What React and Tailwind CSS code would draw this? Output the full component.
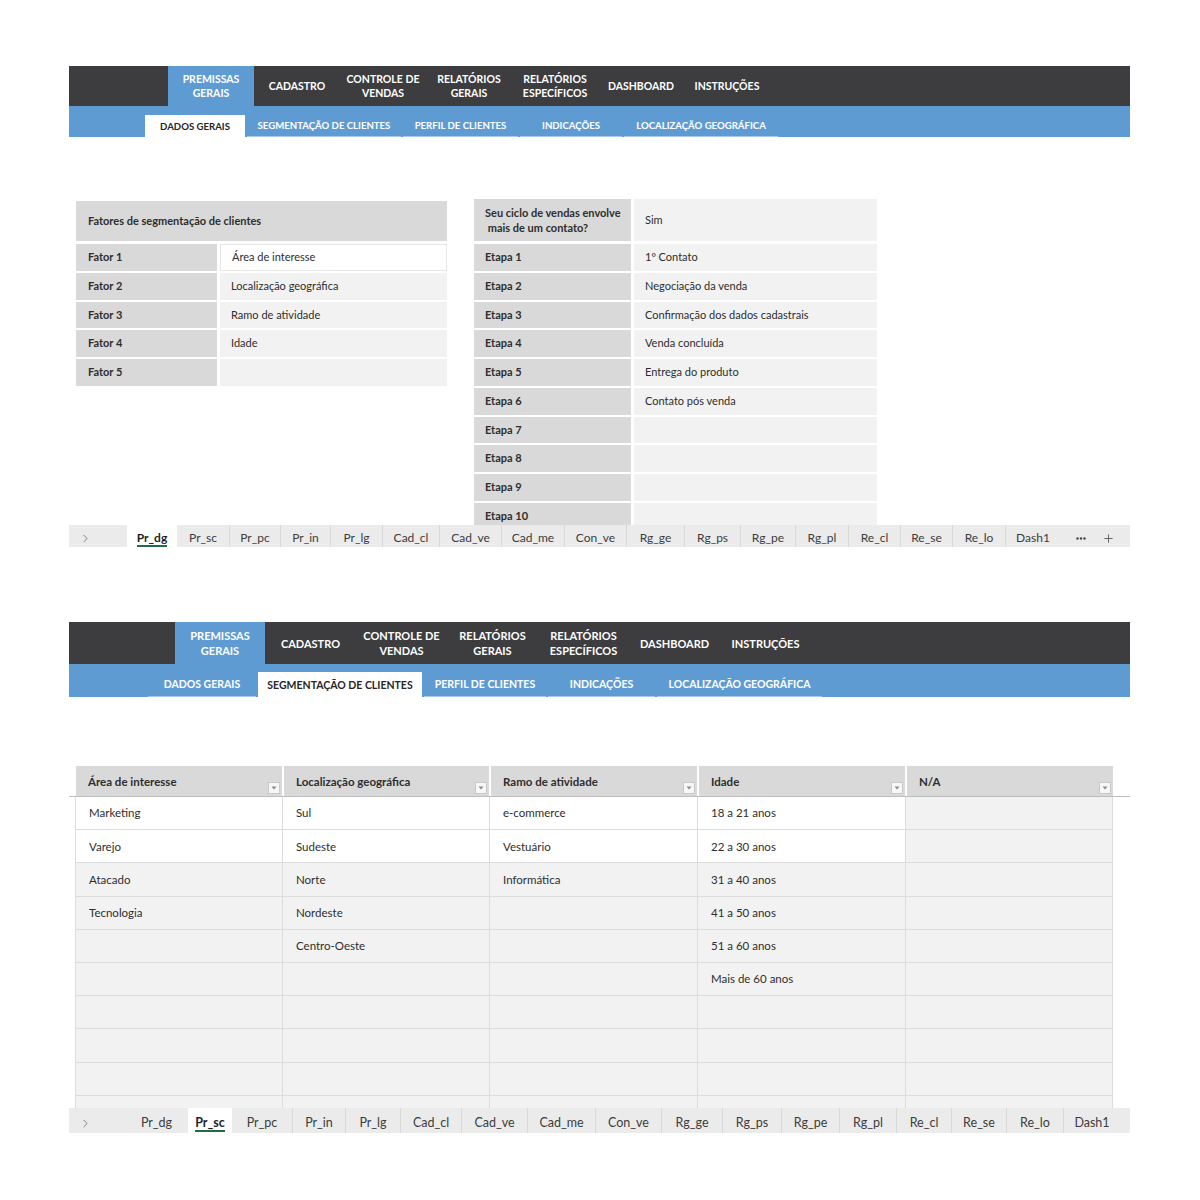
import { ChevronRight, Plus } from 'lucide-react'

const navItems = [
  ['PREMISSAS', 'GERAIS'],
  ['CADASTRO'],
  ['CONTROLE DE', 'VENDAS'],
  ['RELATÓRIOS', 'GERAIS'],
  ['RELATÓRIOS', 'ESPECÍFICOS'],
  ['DASHBOARD'],
  ['INSTRUÇÕES'],
]

const subTabs1 = [
  { label: 'DADOS GERAIS', w: 'w-[100px]' },
  { label: 'SEGMENTAÇÃO DE CLIENTES', w: 'w-[154px]' },
  { label: 'PERFIL DE CLIENTES', w: 'w-[115px]' },
  { label: 'INDICAÇÕES', w: 'w-[102px]' },
  { label: 'LOCALIZAÇÃO GEOGRÁFICA', w: 'w-[154px]' },
]

const subTabs2 = [
  { label: 'DADOS GERAIS', w: 'w-[108px]' },
  { label: 'SEGMENTAÇÃO DE CLIENTES', w: 'w-[164px]' },
  { label: 'PERFIL DE CLIENTES', w: 'w-[122px]' },
  { label: 'INDICAÇÕES', w: 'w-[107px]' },
  { label: 'LOCALIZAÇÃO GEOGRÁFICA', w: 'w-[165px]' },
]

const sheets1 = [
  ['Pr_dg', 'w-[50px]'], ['Pr_sc', 'w-[52px]'], ['Pr_pc', 'w-[51px]'], ['Pr_in', 'w-[50px]'],
  ['Pr_lg', 'w-[52px]'], ['Cad_cl', 'w-[57px]'], ['Cad_ve', 'w-[62px]'], ['Cad_me', 'w-[63px]'],
  ['Con_ve', 'w-[62px]'], ['Rg_ge', 'w-[58px]'], ['Rg_ps', 'w-[56px]'], ['Rg_pe', 'w-[55px]'],
  ['Rg_pl', 'w-[53px]'], ['Re_cl', 'w-[52px]'], ['Re_se', 'w-[52px]'], ['Re_lo', 'w-[53px]'],
  ['Dash1', 'w-[55px]'],
]

const sheets2 = [
  ['Pr_dg', 'w-[63px]'], ['Pr_sc', 'w-[44px]'], ['Pr_pc', 'w-[60px]'], ['Pr_in', 'w-[53px]'],
  ['Pr_lg', 'w-[55px]'], ['Cad_cl', 'w-[61px]'], ['Cad_ve', 'w-[66px]'], ['Cad_me', 'w-[68px]'],
  ['Con_ve', 'w-[66px]'], ['Rg_ge', 'w-[61px]'], ['Rg_ps', 'w-[59px]'], ['Rg_pe', 'w-[58px]'],
  ['Rg_pl', 'w-[57px]'], ['Re_cl', 'w-[55px]'], ['Re_se', 'w-[55px]'], ['Re_lo', 'w-[57px]'],
  ['Dash1', 'w-[57px]'],
]

const fatores = ['Área de interesse', 'Localização geográfica', 'Ramo de atividade', 'Idade', '']
const etapas = ['1º Contato', 'Negociação da venda', 'Confirmação dos dados cadastrais', 'Venda concluída', 'Entrega do produto', 'Contato pós venda', '', '', '', '']

const columns = ['Área de interesse', 'Localização geográfica', 'Ramo de atividade', 'Idade', 'N/A']
const colData = [
  ['Marketing', 'Varejo', 'Atacado', 'Tecnologia'],
  ['Sul', 'Sudeste', 'Norte', 'Nordeste', 'Centro-Oeste'],
  ['e-commerce', 'Vestuário', 'Informática'],
  ['18 a 21 anos', '22 a 30 anos', '31 a 40 anos', '41 a 50 anos', '51 a 60 anos', 'Mais de 60 anos'],
  [],
]

function TopNav({ lead, itemW, activeW, text, height }) {
  return (
    <div className={`flex ${height} bg-[#3d3d3f]`}>
      <div className={lead} />
      {navItems.map((lines, i) => (
        <div
          key={i}
          className={`${i === 0 ? `${activeW} bg-[#5f9bd3]` : itemW} flex flex-col items-center justify-center font-bold text-white ${text}`}
        >
          {lines.map((l) => (
            <span key={l}>{l}</span>
          ))}
        </div>
      ))}
    </div>
  )
}

function SubNav({ tabs, active, lead, height, tabH, text }) {
  return (
    <div className={`flex items-end ${height} bg-[#5f9bd3]`}>
      <div className={lead} />
      {tabs.map((t, i) => (
        <div
          key={t.label}
          className={`${t.w} ${tabH} mr-[2px] pt-[2px] flex items-center justify-center font-bold ${text} ${
            i === active ? 'bg-white text-[#262626]' : 'text-white border-b border-[#a8c9e9]'
          }`}
        >
          {t.label}
        </div>
      ))}
    </div>
  )
}

function SheetTabs({ sheets, active, lead, height, text, extra, pad }) {
  return (
    <div className={`flex ${height} bg-[#ebebeb] font-['Lato',sans-serif] ${text} text-[#3c3c3c]`}>
      <div className={`${lead} flex items-center pl-[10px] ${pad} text-[#555]`}>
        <ChevronRight size={13} strokeWidth={1.3} />
      </div>
      {sheets.map(([name, w], i) => (
        <div
          key={name}
          className={`${w} flex items-center justify-center ${pad} ${
            i === active ? 'bg-white font-bold text-[#1f1f1f]' : i === active + 1 || i === 0 ? '' : 'border-l border-[#d8d8d8]'
          }`}
        >
          <span className={i === active ? 'border-b-2 border-[#1f6e43] leading-[15px]' : ''}>{name}</span>
        </div>
      ))}
      {extra && (
        <div className={`flex items-center pl-[16px] gap-[16px] text-[#444] ${pad}`}>
          <svg width="10" height="3" viewBox="0 0 10 3">
            <circle cx="1.5" cy="1.5" r="1.2" fill="#444" />
            <circle cx="5" cy="1.5" r="1.2" fill="#444" />
            <circle cx="8.5" cy="1.5" r="1.2" fill="#444" />
          </svg>
          <Plus size={13} strokeWidth={1.4} />
        </div>
      )}
    </div>
  )
}

function DropButton() {
  return (
    <div className="w-[12px] h-[12px] mb-[2px] mr-[2px] self-end bg-[#f7f7f7] border border-[#c9c9c9] flex items-center justify-center">
      <svg width="6" height="4" viewBox="0 0 6 4">
        <path d="M0.5 0.5 L5.5 0.5 L3 3.5 Z" fill="#8a8a8a" />
      </svg>
    </div>
  )
}

export default function App() {
  return (
    <div className="min-h-[1200px] bg-white pt-[66px] font-['Lato',sans-serif] text-[#2e2e2e]">
      {/* Screen 1 */}
      <div className="w-[1061px] ml-[69px]">
        <TopNav lead="w-[99px]" itemW="w-[86px]" activeW="w-[86px]" text="text-[10.5px] leading-[14px]" height="h-[40px]" />
        <SubNav tabs={subTabs1} active={0} lead="w-[76px]" height="h-[31px]" tabH="h-[22px]" text="text-[9.6px]" />

        <div className="h-[388px] overflow-hidden flex items-start pt-[62px]">
          <div className="ml-[7px] mt-[2px] w-[371px] text-[11px]">
            <div className="h-[40px] bg-[#d9d9d9] flex items-center pl-[12px] font-bold">
              Fatores de segmentação de clientes
            </div>
            <div className="mt-[3px] flex flex-col gap-[2px]">
              {fatores.map((v, i) => (
                <div key={i} className="h-[26.75px] flex">
                  <div className="w-[141px] bg-[#d9d9d9] flex items-center pl-[12px] font-bold">Fator {i + 1}</div>
                  <div
                    className={`ml-[3px] flex-1 flex items-center pl-[11px] ${
                      i === 0 ? 'bg-white border border-[#e6e6e6]' : 'bg-[#f2f2f2]'
                    }`}
                  >
                    {v}
                  </div>
                </div>
              ))}
            </div>
          </div>

          <div className="ml-[27px] w-[403px] text-[11px]">
            <div className="h-[42px] flex">
              <div className="w-[157px] bg-[#d9d9d9] flex flex-col justify-center pl-[11px] font-bold leading-[15px]">
                <span>Seu ciclo de vendas envolve</span>
                <span>&nbsp;mais de um contato?</span>
              </div>
              <div className="ml-[3px] flex-1 bg-[#f2f2f2] flex items-center pl-[11px]">Sim</div>
            </div>
            <div className="mt-[3px] flex flex-col gap-[2px]">
              {etapas.map((v, i) => (
                <div key={i} className="h-[26.75px] flex">
                  <div className="w-[157px] bg-[#d9d9d9] flex items-center pl-[11px] font-bold">Etapa {i + 1}</div>
                  <div className="ml-[3px] flex-1 bg-[#f2f2f2] flex items-center pl-[11px]">{v}</div>
                </div>
              ))}
            </div>
          </div>
        </div>

        <SheetTabs sheets={sheets1} active={0} lead="w-[58px]" height="h-[22px]" text="text-[12px]" pad="pt-[4px]" extra />
      </div>

      {/* Screen 2 */}
      <div className="w-[1061px] ml-[69px] mt-[75px]">
        <TopNav lead="w-[106px]" itemW="w-[91px]" activeW="w-[90px]" text="text-[11px] leading-[15px]" height="h-[42px]" />
        <SubNav tabs={subTabs2} active={1} lead="w-[79px]" height="h-[33px]" tabH="h-[25px]" text="text-[10.5px]" />

        <div className="h-[411px] overflow-hidden pt-[69px]">
          <div className="ml-[7px] grid grid-cols-[206px_205px_206px_206px_206px] gap-x-[2px] w-[1037px]">
            {columns.map((c) => (
              <div key={c} className="h-[30px] bg-[#d9d9d9] flex justify-between pl-[12px] text-[11.5px] font-bold">
                <span className="pt-[7px]">{c}</span>
                <DropButton />
              </div>
            ))}
          </div>
          <div className="h-px bg-[#bdbdbd]" />
          <div className="ml-[6px] w-[1038px] flex flex-col">
            {Array.from({ length: 10 }).map((_, r) => (
              <div key={r} className="grid grid-cols-[208px_207px_208px_208px_207px] h-[33.2px] text-[11.5px]">
                {colData.map((col, c) => (
                  <div
                    key={c}
                    className={`flex items-center pl-[13px] border-b border-r border-[#dcdcdc] ${c === 0 ? 'border-l' : ''} ${
                      r < 2 && c < 4 ? 'bg-white' : 'bg-[#f2f2f2]'
                    }`}
                  >
                    {col[r] || ''}
                  </div>
                ))}
              </div>
            ))}
          </div>
        </div>

        <SheetTabs sheets={sheets2} active={1} lead="w-[56px]" height="h-[25px]" text="text-[12.5px]" pad="pt-[5px]" />
      </div>
    </div>
  )
}
